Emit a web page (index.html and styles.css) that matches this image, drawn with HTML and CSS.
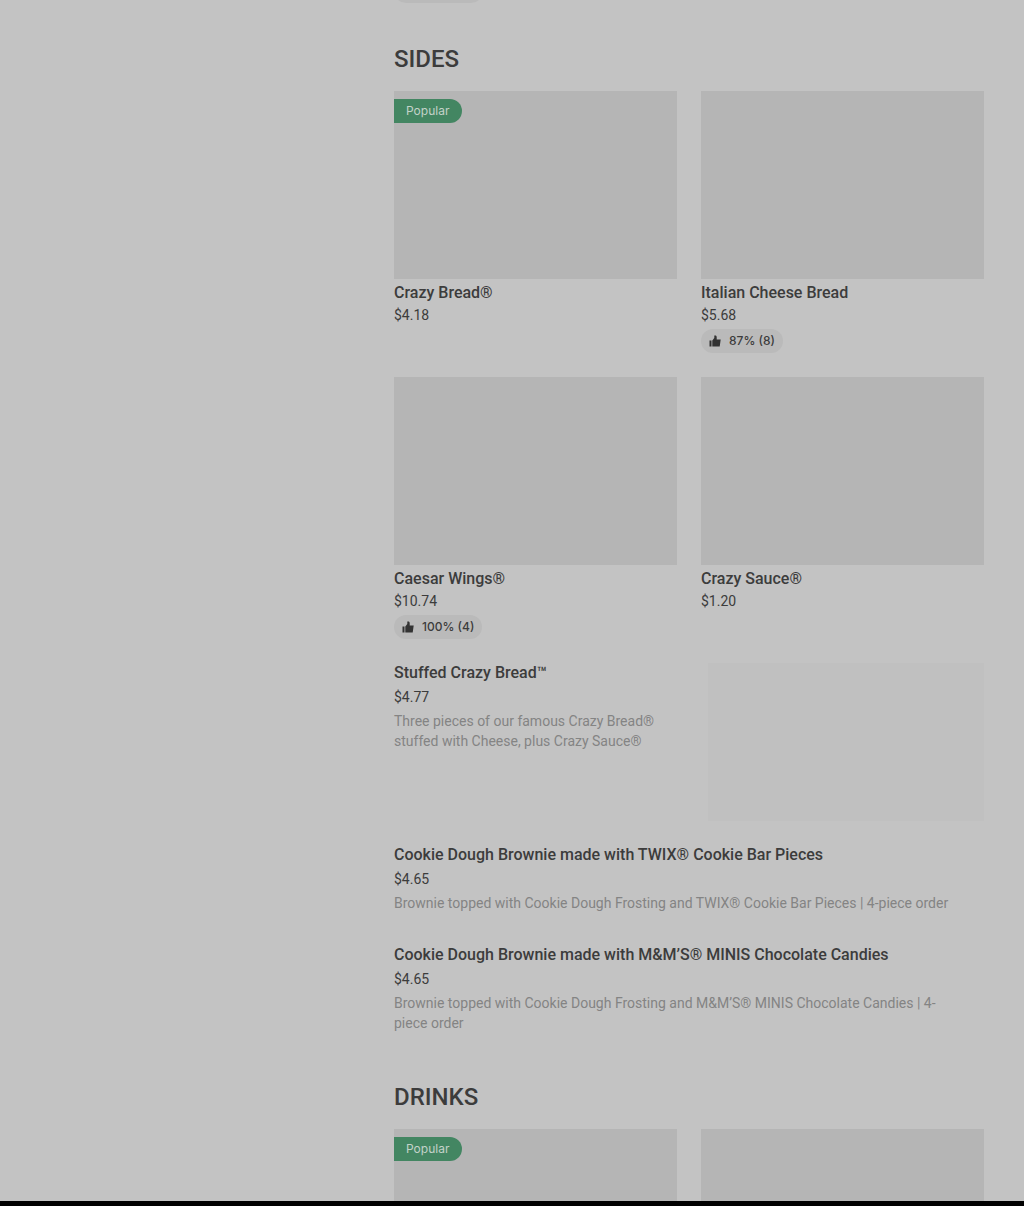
FILE: index.html
```html
<!DOCTYPE html>
<html lang="en">
<head>
    <meta charset="UTF-8">
    <meta name="viewport" content="width=device-width, initial-scale=1.0">
    <title>Menu</title>
    <link rel="stylesheet" href="styles.css">
</head>
<body>
    <svg class="sprite" aria-hidden="true">
        <symbol id="thumb" viewBox="0 0 12 12">
            <path d="M.5 5.500h2V11.500H.5zM3.300 5.500L5.300 3V.5H6.200C7.200.5 7.700 1.200 7.700 2.200V4.500H11.700L10.700 11.500H3.300z"/>
        </symbol>
    </svg>

    <main class="menu">
        <div class="previous">
            <span class="rating"></span>
        </div>

        <section class="section">
            <h2>SIDES</h2>
            <div class="grid">
                <article class="card">
                    <div class="photo"><span class="badge">Popular</span></div>
                    <h3>Crazy Bread®</h3>
                    <p class="price">$4.18</p>
                </article>
                <article class="card">
                    <div class="photo"></div>
                    <h3>Italian Cheese Bread</h3>
                    <p class="price">$5.68</p>
                    <span class="rating"><svg><use href="#thumb"/></svg>87% (8)</span>
                </article>
                <article class="card">
                    <div class="photo"></div>
                    <h3>Caesar Wings®</h3>
                    <p class="price">$10.74</p>
                    <span class="rating"><svg><use href="#thumb"/></svg>100% (4)</span>
                </article>
                <article class="card">
                    <div class="photo"></div>
                    <h3>Crazy Sauce®</h3>
                    <p class="price">$1.20</p>
                </article>
            </div>

            <article class="item">
                <div class="item-text">
                    <h3>Stuffed Crazy Bread™</h3>
                    <p class="price">$4.77</p>
                    <p class="description">Three pieces of our famous Crazy Bread® stuffed with Cheese, plus Crazy Sauce®</p>
                </div>
                <div class="thumbnail"></div>
            </article>
            <article class="item">
                <div class="item-text">
                    <h3>Cookie Dough Brownie made with TWIX® Cookie Bar Pieces</h3>
                    <p class="price">$4.65</p>
                    <p class="description">Brownie topped with Cookie Dough Frosting and TWIX® Cookie Bar Pieces | 4-piece order</p>
                </div>
            </article>
            <article class="item">
                <div class="item-text">
                    <h3>Cookie Dough Brownie made with M&amp;M’S® MINIS Chocolate Candies</h3>
                    <p class="price">$4.65</p>
                    <p class="description">Brownie topped with Cookie Dough Frosting and M&amp;M’S® MINIS Chocolate Candies | 4-piece order</p>
                </div>
            </article>
        </section>

        <section class="section">
            <h2>DRINKS</h2>
            <div class="grid">
                <article class="card">
                    <div class="photo"><span class="badge">Popular</span></div>
                </article>
                <article class="card">
                    <div class="photo"></div>
                </article>
            </div>
        </section>
    </main>
    <footer></footer>
</body>
</html>
```
FILE: styles.css
```css
* {
    box-sizing: border-box;
}

body {
    display: flex;
    flex-direction: column;
    height: 100vh;
    margin: 0;
    overflow: hidden;
    background-color: #c3c3c3;
    color: #3c3c3c;
    font-family: Roboto, "Liberation Sans", sans-serif;
    font-size: 14px;
    line-height: 20px;
}

h2, h3, p {
    margin: 0;
}

.sprite {
    display: none;
}

.menu {
    flex: 1;
    min-height: 0;
    overflow: hidden;
    padding: 0 40px 0 394px;
}

/* tail of the section above, scrolled out of view */
.previous {
    display: flex;
    align-items: flex-end;
    height: 3px;
    overflow: hidden;
}

.previous .rating {
    flex: none;
    width: 89px;
}

.section {
    padding: 40px 0 8px;
}

.section h2 {
    margin-bottom: 16px;
    font-size: 24px;
    font-weight: 500;
    line-height: 32px;
}

h3 {
    font-size: 16px;
    font-weight: 500;
}

.grid {
    display: grid;
    grid-template-columns: 1fr 1fr;
    gap: 24px;
}

.photo {
    height: 188px;
    margin-bottom: 2px;
    padding-top: 8px;
    background-color: #b5b5b5;
}

.card h3 {
    line-height: 24px;
}

.badge {
    display: block;
    width: 68px;
    padding-left: 12px;
    border-radius: 0 12px 12px 0;
    background-color: #438662;
    color: #c3d2c9;
    font-family: Inter, sans-serif;
    font-size: 12px;
    line-height: 24px;
}

.rating {
    display: inline-flex;
    align-items: center;
    height: 24px;
    margin-top: 4px;
    padding: 0 8px;
    border-radius: 12px;
    background-color: #bababa;
    font-family: Inter, sans-serif;
    font-size: 12px;
    font-weight: 500;
    vertical-align: top;
}

.rating svg {
    width: 12px;
    height: 12px;
    margin-right: 8px;
    fill: #333;
}

.item {
    display: flex;
    gap: 24px;
    min-height: 76px;
    margin-top: 24px;
}

.item-text {
    flex: 1;
    padding-right: 24px;
}

.item .price {
    margin: 4px 0;
}

.description {
    color: #848484;
}

.thumbnail {
    flex: none;
    width: 276px;
    height: 158px;
    background-color: #c0c0c0;
}

footer {
    flex: none;
    height: 5px;
    background-color: #000;
}
```
